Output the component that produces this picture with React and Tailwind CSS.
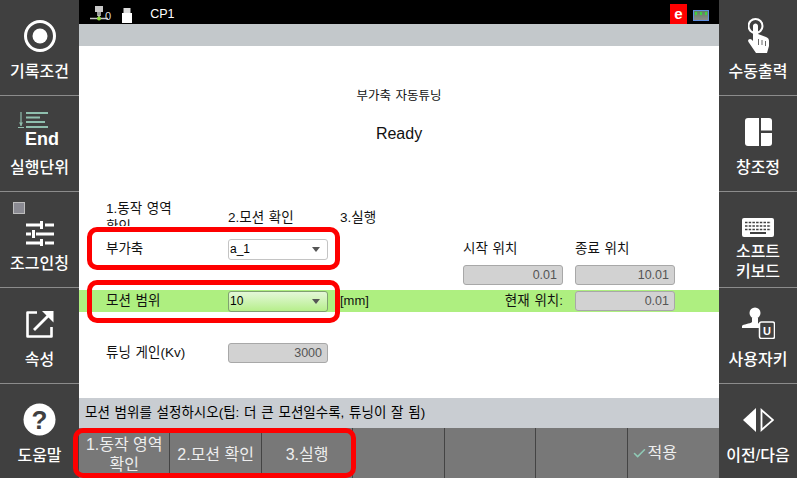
import { Check } from 'lucide-react';

const font = { fontFamily: '"Liberation Sans", "Noto Sans CJK KR", sans-serif' };

function SideItem({ label, icon, last }) {
    return (
        <div className={`flex flex-col items-center ${last ? 'flex-1' : 'h-[96px] border-b border-[#8c8c8c]'}`}>
            <div className="h-[60px] w-full flex items-center justify-center relative">{icon}</div>
            <div className="h-[24px] flex items-center text-[16px] font-medium text-white whitespace-nowrap">{label}</div>
        </div>
    );
}

function RecordIcon() {
    return (
        <svg width="34" height="34" viewBox="0 0 34 34" className="mt-[11px]">
            <circle cx="17" cy="17" r="14.5" fill="none" stroke="#fff" strokeWidth="3" />
            <circle cx="17" cy="17" r="7.5" fill="#fff" />
        </svg>
    );
}

function EndIcon() {
    return (
        <div className="relative w-[79px] h-[60px]">
            <svg width="34" height="18" viewBox="0 0 34 18" className="absolute left-[18px] top-[16px]">
                <path d="M3 0v14M0 15.500h6" stroke="#8fbfae" strokeWidth="1.200" fill="none" />
                <path d="M1 10.500h4L3 14z" fill="#8fbfae" />
                <path d="M8 1h22M8 5.500h14M8 10h19M8 15h22" stroke="#8fbfae" strokeWidth="2" />
            </svg>
            <span className="absolute left-[25px] top-[33px] text-[18px] leading-[20px] font-bold text-white">End</span>
        </div>
    );
}

function JogIcon() {
    return (
        <>
            <span className="absolute left-[13px] top-[10px] w-[12px] h-[12px] bg-[#8a8a92] border border-[#bdbdbd]" />
            <svg width="28" height="25" viewBox="0 0 28 25" className="mt-[22px]">
                <path d="M0 4h14M19 4h9M0 13h5M10 13h18M0 22h14M19 22h9" stroke="#fff" strokeWidth="3" />
                <path d="M15.500 0v8M7.500 9v8M15.500 18v7" stroke="#fff" strokeWidth="3" />
            </svg>
        </>
    );
}

function ExternalIcon() {
    return (
        <svg width="28" height="28" viewBox="0 0 28 28" className="mt-[11px]">
            <path d="M11 2.500H1.500v24h24V17" fill="none" stroke="#fff" strokeWidth="2.600" strokeLinejoin="round" />
            <path d="M8 20L23 5" stroke="#fff" strokeWidth="2.800" />
            <path d="M16 1h11.500v11.500z" fill="#fff" />
        </svg>
    );
}

function HelpIcon() {
    return (
        <svg width="33" height="33" viewBox="0 0 33 33" className="mt-[11px]">
            <circle cx="16.500" cy="16.500" r="16" fill="#fff" />
            <text x="16.500" y="25.500" textAnchor="middle" fontSize="26" fontWeight="700" fill="#404040" fontFamily="Liberation Sans">?</text>
        </svg>
    );
}

function HandIcon() {
    return (
        <svg width="21" height="35" viewBox="0 0 21 35" className="mt-[10px]">
            <circle cx="7.500" cy="8" r="7" fill="none" stroke="#fff" strokeWidth="2" />
            <path d="M5 8c0-3.500 5-3.500 5 0v8l8 3c2 .800 3 2 3 4v5l-2 7H8L.500 24c-1.500-2.500 1.500-4 3-2.500L5 23z" fill="#fff" />
            <path d="M10.500 21v6M14 22v5M17.500 23v5" stroke="#404040" strokeWidth="0.800" />
        </svg>
    );
}

function WindowIcon() {
    return (
        <svg width="27" height="28" viewBox="0 0 27 28" className="mt-[11px]">
            <path d="M3 0h11v28H3a3 3 0 0 1-3-3V3a3 3 0 0 1 3-3z" fill="#fff" />
            <path d="M16 0h8a3 3 0 0 1 3 3v9.500H16z" fill="#fff" />
            <path d="M16 15h11v10a3 3 0 0 1-3 3h-8z" fill="#fff" />
        </svg>
    );
}

function KeyboardIcon() {
    return (
        <svg width="32" height="19" viewBox="0 0 32 19" className="mt-[26px]">
            <rect width="32" height="19" rx="2" fill="#fff" />
            <path d="M3 4.500h26M3 8h26M3 11.500h26" stroke="#404040" strokeWidth="1.600" strokeDasharray="2.500 1.200" />
            <path d="M8 15h16" stroke="#404040" strokeWidth="2" />
        </svg>
    );
}

function UserKeyIcon() {
    return (
        <svg width="33" height="32" viewBox="0 0 33 32" className="mt-[9px]">
            <circle cx="13" cy="6" r="5.500" fill="#fff" />
            <path d="M10 11h6v5l3 2v3H0v-2c1-2 8-2 10-4z" fill="#fff" />
            <rect x="17.500" y="15" width="15" height="16.500" rx="2" fill="#404040" stroke="#fff" strokeWidth="1.500" />
            <text x="25" y="27.500" textAnchor="middle" fontSize="11" fontWeight="700" fill="#fff" fontFamily="Liberation Sans">U</text>
        </svg>
    );
}

function PrevNextIcon() {
    return (
        <svg width="31" height="24" viewBox="0 0 31 24" className="mt-[11px]">
            <path d="M13 0v24L0 12z" fill="#fff" />
            <path d="M18.500 2v20L30 12z" fill="none" stroke="#fff" strokeWidth="1.800" />
        </svg>
    );
}

function Select({ value, green }) {
    return (
        <div className={`h-[21px] w-[100px] rounded-[3px] border flex items-center justify-between pl-px pr-[7px] text-[12px] text-black ${green ? 'border-[#7fa070] bg-gradient-to-b from-[#e4f7d8] to-[#b6ee8a]' : 'border-[#c4c4c4] bg-white'}`}>
            <span>{value}</span>
            <span className="w-0 h-0 border-l-[4px] border-r-[4px] border-t-[5px] border-l-transparent border-r-transparent border-t-[#555]" />
        </div>
    );
}

function ReadOnly({ value }) {
    return (
        <div className="h-[20px] w-[100px] rounded-[3px] border border-[#a8a8a8] bg-[#d2d2d2] flex items-center justify-end pr-[5px] text-[12.500px] text-[#555]">
            {value}
        </div>
    );
}

const softkeys = ['1.동작 영역\n확인', '2.모션 확인', '3.실행', '', '', ''];

export default function App() {
    return (
        <div className="relative w-[797px] h-[478px] flex overflow-hidden bg-[#404040]" style={font}>
            <div className="w-[79px] shrink-0 flex flex-col">
                <SideItem label="기록조건" icon={<RecordIcon />} />
                <SideItem label="실행단위" icon={<EndIcon />} />
                <SideItem label="조그인칭" icon={<JogIcon />} />
                <SideItem label="속성" icon={<ExternalIcon />} />
                <SideItem label="도움말" icon={<HelpIcon />} last />
            </div>

            <div className="w-[640px] shrink-0 flex flex-col">
                <div className="h-[24px] bg-black flex items-end text-white relative pb-[1px]">
                    <svg width="20" height="16" viewBox="0 0 20 16" className="ml-[11px] mb-[1px]">
                        <rect x="5" y="0" width="8" height="6" fill="#c8c8c8" />
                        <rect x="7" y="6" width="4" height="4" fill="#9a9a9a" />
                        <path d="M0 12.500h18" stroke="#c8c8c8" strokeWidth="1.500" />
                        <path d="M9 9v3" stroke="#c8c8c8" strokeWidth="1.500" />
                        <circle cx="9" cy="12.500" r="2" fill="#8fdc3c" />
                    </svg>
                    <span className="text-[11px] leading-none mb-[1px] -ml-[5px] text-[#ddd]">0</span>
                    <svg width="10" height="15" viewBox="0 0 10 15" className="ml-[11px]">
                        <rect x="1.500" y="0" width="7" height="5" fill="#ddd" />
                        <rect y="5" width="10" height="10" fill="#fff" />
                    </svg>
                    <span className="ml-[18px] text-[12.500px] leading-[16px] mb-[1px]">CP1</span>
                    <div className="ml-auto mr-[32px] -mb-[1px] w-[17px] h-[20px] bg-[#fe0000] flex items-center justify-center font-bold text-[15px]">e</div>
                    <div className="absolute right-[10px] top-[10px] w-[16px] h-[11px] border border-[#5f8fe0] bg-gradient-to-b from-[#5d7f5d] to-[#8a8a8a] flex justify-around pt-[1px]">
                        <span className="w-[2px] h-[3px] bg-[#3fd03f]" />
                        <span className="w-[2px] h-[3px] bg-[#3fd03f]" />
                        <span className="w-[2px] h-[3px] bg-[#3fd03f]" />
                    </div>
                </div>
                <div className="h-[22px] bg-[#c3c8cb]" />

                <div className="flex-1 bg-white flex flex-col text-[13.500px] text-[#111] [word-spacing:1px]">
                    <div className="mt-[41px] h-[18px] flex items-center justify-center text-[12.500px]">부가축 자동튜닝</div>
                    <div className="mt-[17px] h-[24px] flex items-center justify-center text-[16px]">Ready</div>

                    <div className="mt-[53px] h-[27px] overflow-hidden pl-[27px] pt-[1px] grid grid-cols-[122px_112px_1fr] items-start">
                        <div className="leading-[18px]">1.동작 영역<br />확인</div>
                        <div className="mt-[10px] leading-[16px]">2.모션 확인</div>
                        <div className="mt-[10px] leading-[16px]">3.실행</div>
                    </div>

                    <div className="mt-[8px] pl-[27px] grid grid-cols-[122px_112px_123px_112px_100px] items-center h-[30px]">
                        <div>부가축</div>
                        <Select value="a_1" />
                        <div />
                        <div>시작 위치</div>
                        <div>종료 위치</div>
                    </div>

                    <div className="pl-[27px] grid grid-cols-[357px_112px_100px] h-[20px] mt-[1px] items-center">
                        <div />
                        <ReadOnly value="0.01" />
                        <ReadOnly value="10.01" />
                    </div>

                    <div className="mt-[5px] h-[22px] bg-[#aeef80] pl-[27px] grid grid-cols-[122px_112px_100px_135px_100px] items-center">
                        <div>모션 범위</div>
                        <Select value="10" green />
                        <div className="text-[13px]">[mm]</div>
                        <div className="text-right pr-[12px]">현재 위치:</div>
                        <ReadOnly value="0.01" />
                    </div>

                    <div className="mt-[30px] pl-[27px] grid grid-cols-[122px_100px] items-center h-[22px]">
                        <div>튜닝 게인(Kv)</div>
                        <ReadOnly value="3000" />
                    </div>
                </div>

                <div className="h-[30px] bg-[#c9cdd2] flex items-center pl-[6px] text-[13.500px] text-black [word-spacing:1px]">
                    모션 범위를 설정하시오(팁: 더 큰 모션일수록, 튜닝이 잘 됨)
                </div>
                <div className="h-[50px] bg-[#787878] grid grid-cols-7 text-[16px] text-[#eee] text-center leading-[20px]">
                    {softkeys.map((k, i) => (
                        <div key={i} className="border-r border-[#444] flex items-center justify-center whitespace-pre-line pt-[3px]">{k}</div>
                    ))}
                    <div className="flex items-center justify-start gap-px pl-[4px]">
                        <Check size={15} strokeWidth={2.500} className="text-[#8fc9b5]" />
                        적용
                    </div>
                </div>
            </div>

            <div className="flex-1 flex flex-col">
                <SideItem label="수동출력" icon={<HandIcon />} />
                <SideItem label="창조정" icon={<WindowIcon />} />
                <div className="h-[96px] border-b border-[#8c8c8c] flex flex-col items-center">
                    <KeyboardIcon />
                    <div className="mt-[5px] text-[16px] leading-[20px] font-medium text-white text-center">소프트<br />키보드</div>
                </div>
                <SideItem label="사용자키" icon={<UserKeyIcon />} />
                <SideItem label="이전/다음" icon={<PrevNextIcon />} last />
            </div>

            <div className="absolute left-[87px] top-[227px] w-[253px] h-[43px] rounded-[10px] border-[5px] border-[#fe0000]" />
            <div className="absolute left-[87px] top-[280px] w-[253px] h-[43px] rounded-[10px] border-[5px] border-[#fe0000]" />
            <div className="absolute left-[73px] top-[428px] w-[283px] h-[50px] rounded-[10px] border-[5px] border-[#fe0000]" />
        </div>
    );
}
